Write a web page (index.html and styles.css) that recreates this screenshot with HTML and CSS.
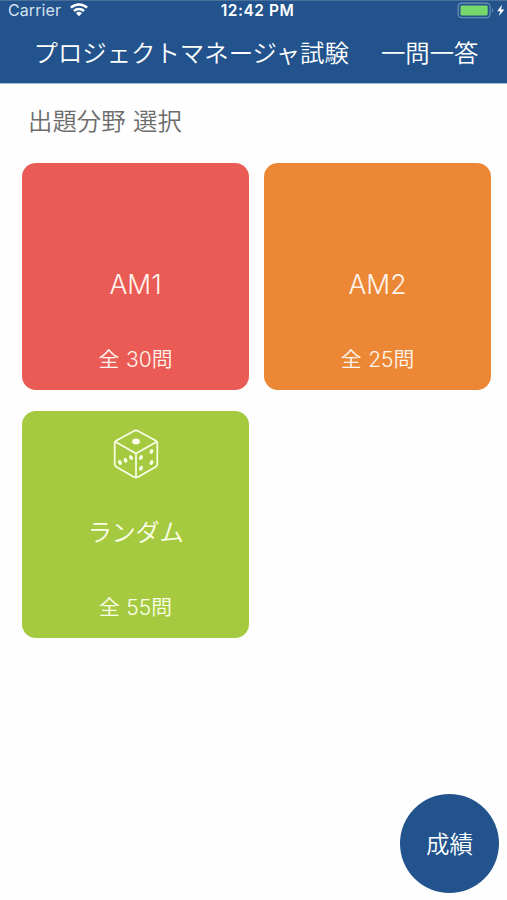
FILE: index.html
```html
<!DOCTYPE html>
<html lang="ja">
<head>
<meta charset="utf-8">
<title>プロジェクトマネージャ試験 一問一答</title>
<link rel="stylesheet" href="styles.css">
</head>
<body>
<header class="header">
  <div class="status">
    <div class="status-left">
      <span class="carrier">Carrier</span>
      <svg class="wifi" viewBox="0 0 20 15" width="20" height="15">
        <path d="M1.9 5.7a11.6 11.6 0 0 1 16.2 0M5 9a7.2 7.2 0 0 1 10 0" fill="none" stroke="#fff" stroke-width="2.5"/>
        <path d="M7 11.2a4.4 4.4 0 0 1 6 0L10 14.3z" fill="#fff"/>
      </svg>
    </div>
    <span class="clock">12:42 PM</span>
    <svg class="battery" viewBox="0 0 50 18" width="50" height="18">
      <rect x="1.1" y="1.1" width="32" height="14.6" rx="3.6" fill="none" stroke="#6f98b8" stroke-width="1.1"/>
      <rect x="3.5" y="3.4" width="27.2" height="10" rx="1.4" fill="#76d86b"/>
      <path d="M35 6q2 2.4 0 4.8z" fill="#6f98b8"/>
      <path d="M45 2.8L40.1 9.2H43.3L41.8 14L47.5 7.4H44.1z" fill="#fff"/>
    </svg>
  </div>
  <h1 class="title"><span>プロジェクトマネージャ試験</span><span>一問一答</span></h1>
</header>
<main class="content">
  <h2 class="heading">出題分野 選択</h2>
  <div class="grid">
    <section class="card red">
      <div class="icon"></div>
      <div class="name latin">AM1</div>
      <div class="count">全 <span class="num">30</span>問</div>
    </section>
    <section class="card orange">
      <div class="icon"></div>
      <div class="name latin">AM2</div>
      <div class="count">全 <span class="num">25</span>問</div>
    </section>
    <section class="card green">
      <div class="icon">
        <svg viewBox="0 0 46 50" width="46" height="50">
          <g fill="none" stroke="#fbffe9" stroke-width="1.7" stroke-linejoin="round">
            <path d="M21 2Q23 .9 25 2L42.5 11.5Q44.3 12.6 44.3 14.5V35Q44.3 37 42.5 38L25 48Q23 49.1 21 48L3.5 38Q1.7 37 1.7 35V14.5Q1.7 12.6 3.5 11.5Z"/>
            <path d="M2.3 12.7L23 24.5L43.7 12.7M23 24.5V48.4"/>
          </g>
          <g fill="#fbffe9">
            <ellipse cx="23" cy="12.5" rx="3.9" ry="2.9"/>
            <ellipse cx="7" cy="33.5" rx="1.8" ry="2.5" transform="rotate(-25 7 33.5)"/>
            <ellipse cx="12.5" cy="31.2" rx="1.8" ry="2.5" transform="rotate(-25 12.5 31.2)"/>
            <ellipse cx="18" cy="28.6" rx="1.8" ry="2.5" transform="rotate(-25 18 28.6)"/>
            <ellipse cx="28" cy="28.5" rx="1.8" ry="2.6" transform="rotate(25 28 28.5)"/>
            <ellipse cx="38.5" cy="22.5" rx="1.8" ry="2.6" transform="rotate(25 38.5 22.5)"/>
            <ellipse cx="28" cy="39.2" rx="1.8" ry="2.6" transform="rotate(25 28 39.2)"/>
            <ellipse cx="38.5" cy="33.5" rx="1.8" ry="2.6" transform="rotate(25 38.5 33.5)"/>
          </g>
        </svg>
      </div>
      <div class="name kana">ランダム</div>
      <div class="count">全 <span class="num">55</span>問</div>
    </section>
  </div>
</main>
<button class="fab">成績</button>
</body>
</html>
```
FILE: styles.css
```css
* { box-sizing: border-box; }
html, body { height: 100%; }
body {
  margin: 0;
  overflow: hidden;
  background: #fefefe;
  color: #6c6c6c;
  font-family: "Noto Sans CJK JP", sans-serif;
  font-weight: 350;
}
.header {
  height: 84px;
  background: #22538d;
  border-top: 1px solid #47709a;
  border-bottom: 1px solid #a9bfd5;
  color: #fff;
}
.status {
  display: grid;
  grid-template-columns: 1fr auto 1fr;
  align-items: center;
  height: 19px;
  padding: 0 0 0 8px;
  font-family: Inter, sans-serif;
}
.status-left { display: flex; align-items: center; gap: 8px; }
.carrier { font-size: 16px; line-height: 19px; font-weight: 400; color: #d5e2ee; letter-spacing: .1px; }
.wifi { margin-top: -2px; }
.clock { font-size: 15.5px; line-height: 19px; font-weight: 600; letter-spacing: .55px; }
.battery { justify-self: end; }
.title {
  display: flex;
  justify-content: center;
  gap: 32px;
  margin: 14px 0 0;
  padding-left: 5px;
  font-size: 24.4px;
  line-height: 36px;
  font-weight: 350;
  white-space: nowrap;
}
.content { padding: 18px 16px 0 22px; }
.heading {
  margin: 0 0 25px 6px;
  font-size: 24.4px;
  line-height: 36px;
  font-weight: 350;
  word-spacing: 2px;
}
.grid {
  display: grid;
  grid-template-columns: 227px 227px;
  gap: 21px 15px;
}
.card {
  height: 227px;
  border-radius: 14px;
  padding-top: 18px;
  color: #fff5ee;
  text-align: center;
}
.red { background: #ea5b55; }
.orange { background: #ec8835; }
.green { background: #a5ca40; color: #fbffe9; }
.icon { height: 50px; }
.icon svg { display: block; margin: 0 auto; }
.name { margin-top: 32px; font-size: 24.3px; line-height: 40px; }
.kana { letter-spacing: -.4px; }
.latin { font-family: Inter, sans-serif; font-weight: 350; font-size: 26.5px; padding-top: 2px; line-height: 38px; }
.count { margin-top: 37px; font-size: 20.8px; line-height: 36px; word-spacing: 2px; }
.num { font-family: Inter, sans-serif; font-size: 21px; font-weight: 350; }
.fab {
  position: fixed;
  right: 8px;
  bottom: 7px;
  width: 99px;
  height: 99px;
  padding: 0;
  border: 0;
  border-radius: 50%;
  background: #22538d;
  color: #fff;
  font: 350 23.5px/99px "Noto Sans CJK JP", sans-serif;
}
```
